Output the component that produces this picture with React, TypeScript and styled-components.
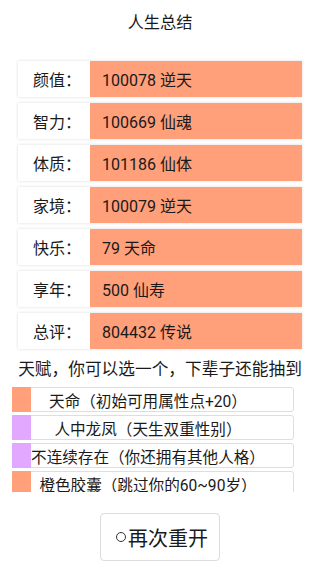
import React from "react";
import styled, { createGlobalStyle } from "styled-components";

const GlobalStyle = createGlobalStyle`
  body {
    margin: 0;
    background: #ffffff;
    font-family: Roboto, "Noto Sans CJK SC", sans-serif;
    color: #1a1a1a;
  }
`;

const Page = styled.div`
  width: 320px;
  height: 562px;
  overflow: hidden;
  display: flex;
  flex-direction: column;
`;

const Title = styled.div`
  margin-top: 12px;
  height: 22px;
  line-height: 22px;
  text-align: center;
  font-size: 16.2px;
`;

const Summary = styled.ul`
  list-style: none;
  margin: 27px 18px 0;
  padding: 0;
  display: flex;
  flex-direction: column;
  gap: 6px;
`;

const Row = styled.li`
  display: flex;
  height: 36px;
  gap: 1px;
  box-shadow: 0 0 3px rgba(0, 0, 0, 0.14);
`;

const Label = styled.div`
  width: 71px;
  background: #ffffff;
  display: flex;
  align-items: center;
  justify-content: flex-end;
  padding-right: 8px;
  box-sizing: border-box;
  font-size: 16px;
`;

const Value = styled.div`
  flex: 1;
  background: #ffa07a;
  display: flex;
  align-items: center;
  padding-left: 12px;
  font-size: 16px;
`;

const Hint = styled.div`
  margin-top: 11px;
  height: 20px;
  line-height: 20px;
  text-align: center;
  font-size: 16.7px;
  white-space: nowrap;
`;

const TalentList = styled.ul`
  list-style: none;
  margin: 7px 0 0 12px;
  padding: 0;
  width: 282px;
  height: 105px;
  overflow: hidden;
  display: flex;
  flex-direction: column;
  gap: 3px;
`;

const Talent = styled.li`
  flex: none;
  display: flex;
  height: 25px;
  border: 1px solid #dedede;
  border-radius: 3px;
  box-sizing: border-box;
  overflow: visible;
`;

const Swatch = styled.span<{ $color: string }>`
  flex: none;
  width: 19px;
  margin: -1px 0 -1px -1px;
  background: ${(p) => p.$color};
`;

const TalentText = styled.span`
  flex: 1;
  display: flex;
  align-items: center;
  justify-content: center;
  padding-right: 28px;
  font-size: 15.6px;
  white-space: nowrap;
`;

const Footer = styled.div`
  flex: 1;
  display: flex;
  justify-content: center;
  padding-top: 21px;
`;

const RestartButton = styled.button`
  width: 120px;
  height: 48px;
  background: #ffffff;
  border: 1px solid #dcdcdc;
  border-radius: 4px;
  display: flex;
  align-items: center;
  justify-content: center;
  padding: 0 0 0 4px;
  font-family: Roboto, "Noto Sans CJK SC", sans-serif;
  font-size: 20px;
  color: #1a1a1a;
`;

const Spinner = styled.span`
  width: 8px;
  height: 8px;
  border: 1px solid #333;
  border-radius: 50%;
  margin-right: 2px;
`;

const ORANGE = "#ffa07a";
const PURPLE = "#e2a7ff";

const summary = [
  ["颜值：", "100078 逆天"],
  ["智力：", "100669 仙魂"],
  ["体质：", "101186 仙体"],
  ["家境：", "100079 逆天"],
  ["快乐：", "79 天命"],
  ["享年：", "500 仙寿"],
  ["总评：", "804432 传说"],
];

const talents = [
  { color: ORANGE, text: "天命（初始可用属性点+20）" },
  { color: PURPLE, text: "人中龙凤（天生双重性别）" },
  { color: PURPLE, text: "不连续存在（你还拥有其他人格）" },
  { color: ORANGE, text: "橙色胶囊（跳过你的60~90岁）" },
];

export default function App() {
  return (
    <Page>
      <GlobalStyle />
      <Title>人生总结</Title>
      <Summary>
        {summary.map(([k, v]) => (
          <Row key={k}>
            <Label>{k}</Label>
            <Value>{v}</Value>
          </Row>
        ))}
      </Summary>
      <Hint>天赋，你可以选一个，下辈子还能抽到</Hint>
      <TalentList>
        {talents.map((t) => (
          <Talent key={t.text}>
            <Swatch $color={t.color} />
            <TalentText>{t.text}</TalentText>
          </Talent>
        ))}
      </TalentList>
      <Footer>
        <RestartButton>
          <Spinner />
          再次重开
        </RestartButton>
      </Footer>
    </Page>
  );
}
